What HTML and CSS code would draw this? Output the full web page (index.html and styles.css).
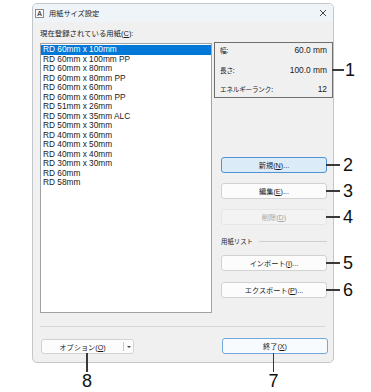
FILE: index.html
```html
<!DOCTYPE html>
<html lang="ja">
<head>
<meta charset="utf-8">
<title>用紙サイズ設定</title>
<link rel="stylesheet" href="styles.css">
</head>
<body>
<div class="dialog">
  <div class="titlebar">
    <svg class="app-icon" viewBox="0 0 9 9" aria-hidden="true">
      <rect x="0.5" y="0.5" width="8" height="8" fill="#fdfdfd" stroke="#8a8a8a" stroke-width="1"/>
      <text x="4.5" y="7" text-anchor="middle" font-family="Liberation Sans, sans-serif" font-size="7" font-weight="bold" fill="#4a4a4a">A</text>
    </svg>
    <span class="title">用紙サイズ設定</span>
    <svg class="close" viewBox="0 0 8 8" aria-hidden="true">
      <path d="M1 1 L7 7 M7 1 L1 7" stroke="#333" stroke-width="0.9" fill="none"/>
    </svg>
  </div>
  <div class="content">
    <div class="list-label">現在登録されている用紙(<u>C</u>):</div>
    <div class="main">
      <ul class="list">
        <li class="selected">RD 60mm x 100mm</li>
        <li>RD 60mm x 100mm PP</li>
        <li>RD 60mm x 80mm</li>
        <li>RD 60mm x 80mm PP</li>
        <li>RD 60mm x 60mm</li>
        <li>RD 60mm x 60mm PP</li>
        <li>RD 51mm x 26mm</li>
        <li>RD 50mm x 35mm ALC</li>
        <li>RD 50mm x 30mm</li>
        <li>RD 40mm x 60mm</li>
        <li>RD 40mm x 50mm</li>
        <li>RD 40mm x 40mm</li>
        <li>RD 30mm x 30mm</li>
        <li>RD 60mm</li>
        <li>RD 58mm</li>
      </ul>
      <div class="side">
        <div class="info">
          <div class="info-row"><span class="info-key">幅:</span><span class="info-val">60.0 mm</span></div>
          <div class="info-row"><span class="info-key">長さ:</span><span class="info-val">100.0 mm</span></div>
          <div class="info-row"><span class="info-key">エネルギーランク:</span><span class="info-val">12</span></div>
          <span class="callout right short"><span class="callout-line"></span><span class="callout-num">1</span></span>
        </div>
        <div class="btn btn-default btn-new">新規(<u>N</u>)...<span class="callout right"><span class="callout-line"></span><span class="callout-num">2</span></span></div>
        <div class="btn btn-edit">編集(<u>E</u>)...<span class="callout right"><span class="callout-line"></span><span class="callout-num">3</span></span></div>
        <div class="btn btn-disabled btn-del">削除(<u>D</u>)<span class="callout right"><span class="callout-line"></span><span class="callout-num">4</span></span></div>
        <div class="group-label"><span class="group-text">用紙リスト</span><span class="group-line"></span></div>
        <div class="btn btn-import">インポート(<u>I</u>)...<span class="callout right"><span class="callout-line"></span><span class="callout-num">5</span></span></div>
        <div class="btn btn-export">エクスポート(<u>P</u>)...<span class="callout right"><span class="callout-line"></span><span class="callout-num">6</span></span></div>
      </div>
    </div>
    <div class="separator"></div>
    <div class="footer">
      <div class="btn btn-split">
        <span class="split-main">オプション(<u>O</u>)</span>
        <span class="split-arrow"></span>
        <span class="callout down down-opt"><span class="callout-vline"></span><span class="callout-num">8</span></span>
      </div>
      <div class="btn btn-close-dlg">終了(<u>X</u>)<span class="callout down down-close"><span class="callout-vline"></span><span class="callout-num">7</span></span></div>
    </div>
  </div>
</div>
</body>
</html>
```
FILE: styles.css
```css
* { box-sizing: border-box; }
html, body { margin: 0; padding: 0; }
body {
  width: 371px;
  height: 392px;
  overflow: hidden;
  background: #ffffff;
  font-family: "Liberation Sans", "Noto Sans CJK JP", sans-serif;
  color: #1b1b1b;
}
u { text-decoration: underline; text-underline-offset: 1px; }

.dialog {
  position: relative;
  margin: 3px 0 0 32px;
  width: 302px;
  height: 360px;
  background: #f0f0f0;
  border: 1px solid #c3c6ca;
  border-radius: 5px;
  display: flex;
  flex-direction: column;
}
.titlebar {
  height: 18px;
  flex: none;
  background: #eef4f7;
  border-radius: 4px 4px 0 0;
  display: flex;
  align-items: center;
  padding: 0 6px 0 2px;
}
.app-icon { width: 9px; height: 9px; flex: none; }
.title {
  margin-left: 5px;
  font-family: "Noto Sans CJK JP", sans-serif;
  font-size: 7.2px;
  color: #222;
}
.close { margin-left: auto; width: 8px; height: 8px; }

.content {
  flex: 1;
  padding: 0 0 0 7px;
  display: flex;
  flex-direction: column;
}
.list-label {
  margin-top: 6px;
  height: 12px;
  line-height: 12px;
  font-size: 7.4px;
  white-space: nowrap;
}
.main {
  display: flex;
  height: 270px;
  margin-top: 3px;
  flex: none;
}
.list {
  margin: 0;
  padding: 1px 0 0;
  list-style: none;
  width: 172px;
  background: #ffffff;
  border: 1px solid #a2a2a2;
}
.list li {
  height: 9.5px;
  line-height: 9.5px;
  font-size: 8.3px;
  padding-left: 2px;
  white-space: nowrap;
  color: #202020;
}
.list li.selected { background: #0078d7; color: #ffffff; }

.side {
  flex: 1;
  margin-left: 2px;
  display: flex;
  flex-direction: column;
}
.info {
  position: relative;
  margin-top: -1px;
  height: 56px;
  border: 1px solid #6f6f6f;
  padding: 0 5px;
  display: flex;
  flex-direction: column;
  gap: 5.5px;
}
.info-row {
  height: 14px;
  display: flex;
  justify-content: space-between;
  align-items: center;
}
.info-key {
  font-family: "Noto Sans CJK JP", sans-serif;
  font-size: 6.6px;
  letter-spacing: -0.2px;
}
.info-val { font-size: 8.4px; }

.btn {
  position: relative;
  flex: none;
  width: 106px;
  height: 16px;
  border: 1px solid #d2d2d2;
  border-radius: 3px;
  background: #fcfcfc;
  font-size: 7.2px;
  display: flex;
  align-items: center;
  justify-content: center;
  white-space: nowrap;
}
.side .btn { margin-left: 7px; }
.btn-default { background: #dcebf8; border-color: #4d93d6; }
.btn-disabled { background: #f3f3f3; border-color: #e6e6e6; color: #a6a6a6; }
.btn-new { margin-top: 59px; }
.btn-edit { margin-top: 10px; }
.btn-del { margin-top: 10px; }
.btn-import { margin-top: 8px; }
.btn-export { margin-top: 11px; }

.group-label {
  margin: 10px 6px 0 7px;
  height: 12px;
  display: flex;
  align-items: center;
}
.group-text {
  font-family: "Noto Sans CJK JP", sans-serif;
  font-size: 6.4px;
  white-space: nowrap;
}
.group-line {
  flex: 1;
  height: 1px;
  margin-left: 6px;
  background: #cfcfcf;
}

.separator {
  margin: 13px 8px 0 0;
  height: 1px;
  background: #d6d6d6;
  flex: none;
}
.footer {
  margin-top: 11px;
  padding-right: 5px;
  display: flex;
  justify-content: space-between;
  align-items: flex-start;
}
.btn-split {
  margin: 1px 0 0 1px;
  width: 93px;
  height: 15px;
  justify-content: flex-start;
}
.split-main {
  flex: 1;
  text-align: center;
}
.split-arrow {
  position: relative;
  width: 10px;
  height: 9px;
  border-left: 1px solid #c8c8c8;
}
.split-arrow::after {
  content: "";
  position: absolute;
  left: 2.5px;
  top: 3.5px;
  border-left: 2px solid transparent;
  border-right: 2px solid transparent;
  border-top: 2.5px solid #444;
}
.btn-close-dlg { background: #f8fbfe; border-color: #72a8dc; }

/* annotation callouts */
.callout {
  position: absolute;
  display: flex;
  align-items: center;
}
.callout.right {
  left: 100%;
  top: 50%;
  transform: translateY(-50%);
}
.callout-line {
  width: 14px;
  height: 1.5px;
  background: #3a3a3a;
}
.callout.short .callout-line { width: 12px; }
.callout.right .callout-num { margin-left: 3px; }
.callout.short .callout-num { margin-left: 1px; }
.callout-num {
  font-family: "Liberation Sans", sans-serif;
  font-size: 18px;
  line-height: 18px;
  color: #111;
}
.callout.down {
  top: 100%;
  flex-direction: column;
  transform: translateX(-50%);
}
.callout-vline {
  width: 1.5px;
  height: 19px;
  background: #3a3a3a;
}
.down-opt { left: 45px; }
.down-close { left: 50.5px; }
```
